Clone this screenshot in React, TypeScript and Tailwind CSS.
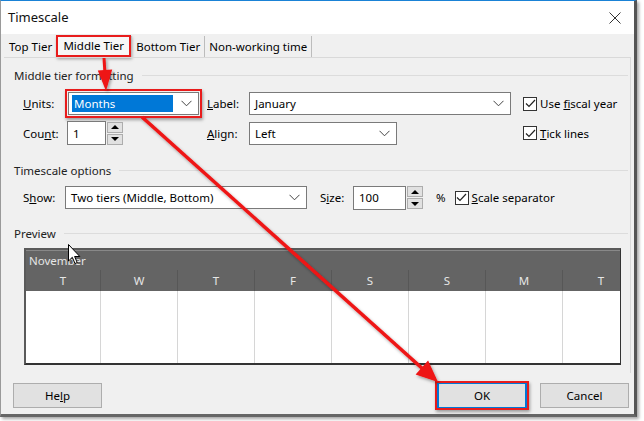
import type { ReactNode } from 'react';

const font = { fontFamily: '"Noto Sans", "Open Sans", sans-serif' };

function Chevron() {
  return (
    <svg width="11" height="7" viewBox="0 0 11 7" className="shrink-0">
      <path d="M0.5 0.8 L5.5 5.8 L10.5 0.8" fill="none" stroke="#444" strokeWidth="1" />
    </svg>
  );
}

function Combo({ value, width, selected }: { value: string; width: string; selected?: boolean }) {
  return (
    <div className={`${width} h-[23px] bg-white border border-[#7a7a7a] flex items-center pl-[3px] pr-[6px] gap-2`}>
      <div
        className={`flex-1 h-[17px] flex items-center pl-[2px] ${
          selected ? 'bg-[#0078d7] text-white' : 'text-black'
        }`}
      >
        {value}
      </div>
      <Chevron />
    </div>
  );
}

function Spinner({ value, width }: { value: string; width: string }) {
  return (
    <div className="flex items-center gap-[1px]">
      <div className={`${width} h-[24px] bg-white border border-[#7a7a7a] flex items-center pl-[5px]`}>
        {value}
      </div>
      <div className="flex flex-col gap-[1px]">
        <div className="w-[16px] h-[11px] bg-[#e1e1e1] border border-[#adadad] flex items-center justify-center">
          <div className="w-0 h-0 border-l-[4px] border-r-[4px] border-b-[4px] border-l-transparent border-r-transparent border-b-black" />
        </div>
        <div className="w-[16px] h-[11px] bg-[#e1e1e1] border border-[#adadad] flex items-center justify-center">
          <div className="w-0 h-0 border-l-[4px] border-r-[4px] border-t-[4px] border-l-transparent border-r-transparent border-t-black" />
        </div>
      </div>
    </div>
  );
}

function Check({ children }: { children: ReactNode }) {
  return (
    <div className="flex items-center gap-[3px]">
      <div className="w-[14px] h-[14px] bg-white border border-[#333] flex items-center justify-center">
        <svg width="11" height="9" viewBox="0 0 11 9">
          <path d="M1 4.5 L4 7.5 L10 1" fill="none" stroke="#222" strokeWidth="1.2" />
        </svg>
      </div>
      <span>{children}</span>
    </div>
  );
}

function GroupTitle({ children }: { children: ReactNode }) {
  return (
    <div className="flex items-center gap-2 pl-[10px] pr-[2px]">
      <span className="text-[#222]">{children}</span>
      <div className="flex-1 h-px bg-[#dcdcdc]" />
    </div>
  );
}

function Btn({ children, width, focus }: { children: ReactNode; width: string; focus?: boolean }) {
  return (
    <div
      className={`${width} h-[25px] bg-[#e1e1e1] flex items-center justify-center border ${
        focus ? 'border-[#0078d7] border-x-2' : 'border-[#adadad]'
      }`}
    >
      {children}
    </div>
  );
}

const days = ['T', 'W', 'T', 'F', 'S', 'S', 'M', 'T'];

export default function App() {
  return (
    <div className="relative w-[644px] h-[421px] bg-white overflow-hidden text-[11.5px] text-black" style={font}>
      <div className="w-[637px] h-[417px] bg-[#f0f0f0] border-t border-t-[#1a82d6] border-l border-l-[#9a9a9a] border-r-[3px] border-r-[#555] border-b-[3px] border-b-[#666] flex flex-col shadow-[2px_2px_3px_rgba(0,0,0,0.35)]">
        {/* title bar */}
        <div className="h-[33px] bg-white flex items-center justify-between pl-[7px] pr-[13px] shrink-0">
          <span className="text-[13px] text-[#111]">Timescale</span>
          <svg width="12" height="12" viewBox="0 0 12 12">
            <path d="M0.5 0.5 L11.5 11.5 M11.5 0.5 L0.5 11.5" stroke="#333" strokeWidth="1" />
          </svg>
        </div>

        {/* tabs */}
        <div className="h-[23px] flex items-end pl-[3px] shrink-0">
          <div className="h-[21px] px-[5px] flex items-center border-r border-r-[#bcbcbc]">Top Tier</div>
          <div className="h-[22px] w-[75px] -ml-[2px] flex items-center justify-center bg-[#f7f7f7] border-2 border-[#e81c1c] shadow-[1px_2px_3px_rgba(0,0,0,0.35)]">
            Middle Tier
          </div>
          <div className="h-[21px] px-[4px] flex items-center border-r border-r-[#bcbcbc] border-l border-l-[#bcbcbc]">Bottom Tier</div>
          <div className="h-[21px] px-[4px] flex items-center border-r border-r-[#bcbcbc]">Non-working time</div>
        </div>

        {/* panel */}
        <div className="h-[316px] mx-[3px] border-t border-r border-[#d9d9d9] flex flex-col pt-[9px] shrink-0">
          <GroupTitle>Middle tier formatting</GroupTitle>

          <div className="flex items-center pl-[19px] mt-[5px]">
            <div className="w-[184px] flex items-center">
              <span className="w-[44px]"><u>U</u>nits:</span>
              <div className="border-2 border-[#e81c1c] p-px shadow-[1px_2px_3px_rgba(0,0,0,0.35)] -ml-[2px]">
                <Combo value="Months" width="w-[131px]" selected />
              </div>
            </div>
            <div className="w-[316px] flex items-center">
              <span className="w-[42px]"><u>L</u>abel:</span>
              <Combo value="January" width="w-[262px]" />
            </div>
            <Check>Use <u>f</u>iscal year</Check>
          </div>

          <div className="flex items-center pl-[19px] mt-[3px]">
            <div className="w-[184px] flex items-center">
              <span className="w-[44px]">Cou<u>n</u>t:</span>
              <Spinner value="1" width="w-[39px]" />
            </div>
            <div className="w-[316px] flex items-center">
              <span className="w-[42px]"><u>A</u>lign:</span>
              <Combo value="Left" width="w-[148px]" />
            </div>
            <Check><u>T</u>ick lines</Check>
          </div>

          <div className="mt-[17px]">
            <GroupTitle>Timescale options</GroupTitle>
          </div>

          <div className="flex items-center pl-[19px] mt-[6px]">
            <span className="w-[42px]">S<u>h</u>ow:</span>
            <Combo value="Two tiers (Middle, Bottom)" width="w-[242px]" />
            <span className="ml-[13px] w-[33px]">S<u>i</u>ze:</span>
            <Spinner value="100" width="w-[53px]" />
            <span className="ml-[13px]">%</span>
            <div className="ml-[9px]">
              <Check><u>S</u>cale separator</Check>
            </div>
          </div>

          <div className="mt-[15px]">
            <GroupTitle>Preview</GroupTitle>
          </div>

          <div className="ml-[20px] mt-[6px] w-[597px] h-[117px] border-2 border-[#5a5a5a] border-r border-r-[#333] border-b-2 border-b-[#333] bg-white flex flex-col overflow-hidden">
            <div className="h-[20px] bg-[#646464] text-[#e6e6e6] flex items-center pl-[3px] border-t border-[#888]">November</div>
            <div className="h-[21px] bg-[#646464] text-[#e6e6e6] grid grid-cols-[75px_77px_77px_77px_77px_77px_77px_77px]">
              {days.map((d, i) => (
                <div key={i} className="flex items-center justify-center border-r border-r-[#575757]">{d}</div>
              ))}
            </div>
            <div className="flex-1 grid grid-cols-[75px_77px_77px_77px_77px_77px_77px_77px]">
              {days.map((_, i) => (
                <div key={i} className="border-r border-r-[#d6d6d6]" />
              ))}
            </div>
          </div>
        </div>

        {/* buttons */}
        <div className="flex items-center pl-[12px] mt-[8px]">
          <Btn width="w-[89px]">He<u>l</u>p</Btn>
          <div className="ml-[333px] border-2 border-[#e81c1c] shadow-[1px_2px_3px_rgba(0,0,0,0.35)]">
            <Btn width="w-[90px]" focus>OK</Btn>
          </div>
          <div className="ml-[11px]">
            <Btn width="w-[89px]">Cancel</Btn>
          </div>
        </div>
      </div>

      {/* annotation arrows */}
      <svg className="absolute inset-0 pointer-events-none" width="644" height="421" viewBox="0 0 644 421">
        <defs>
          <filter id="sh" x="-20%" y="-20%" width="140%" height="140%">
            <feDropShadow dx="1.5" dy="2" stdDeviation="1.5" floodColor="#000" floodOpacity="0.35" />
          </filter>
        </defs>
        <g filter="url(#sh)" fill="#ee1414" stroke="#ee1414">
          <line x1="104" y1="58" x2="105" y2="74" strokeWidth="3" />
          <polygon points="97.8,70.4 112.2,69.6 106,91" stroke="none" />
          <line x1="142" y1="117" x2="424" y2="370" strokeWidth="3.5" />
          <polygon points="415.6,374.5 428.1,360.6 438,382" stroke="none" />
        </g>
        {/* mouse cursor */}
        <path
          d="M68.5 244.5 L68.5 261 L72.3 257.3 L75 263.5 L77.2 262.6 L74.6 256.5 L79.8 256.5 Z"
          fill="#fff"
          stroke="#000"
          strokeWidth="1"
        />
      </svg>
    </div>
  );
}
